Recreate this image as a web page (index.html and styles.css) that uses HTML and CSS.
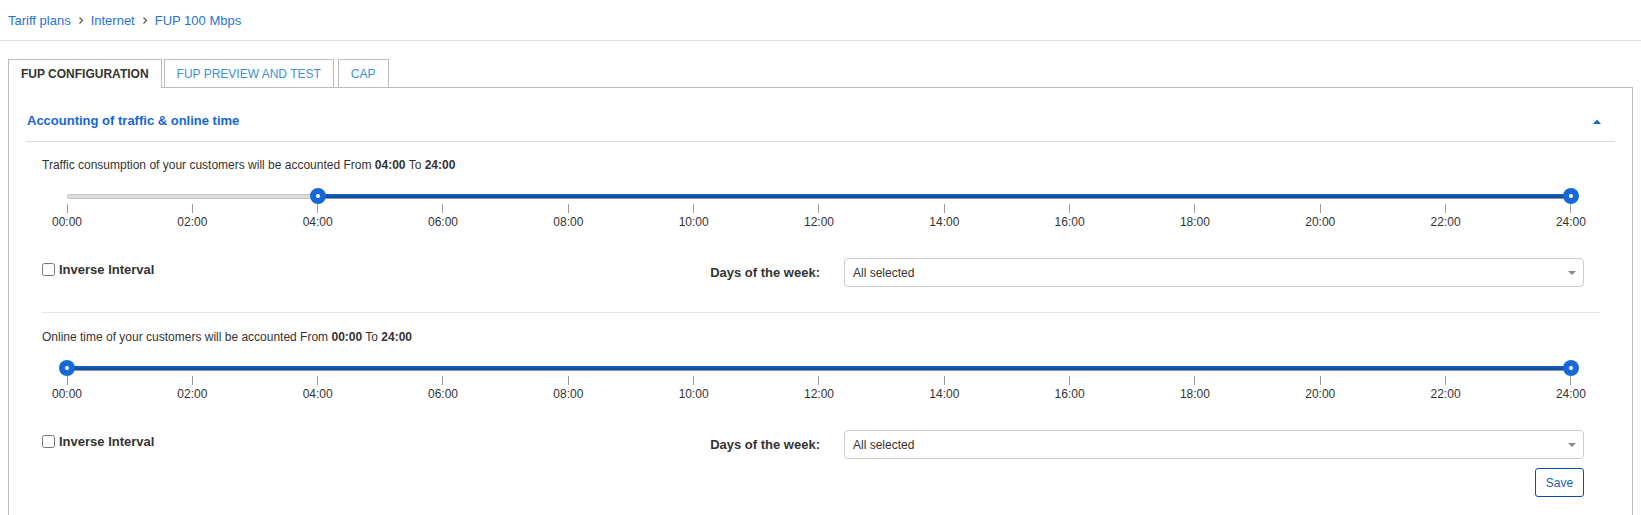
FILE: index.html
```html
<!DOCTYPE html>
<html lang="en">
<head>
<meta charset="utf-8">
<title>FUP 100 Mbps</title>
<link rel="stylesheet" href="styles.css">
</head>
<body>
<nav class="breadcrumb">
  <a class="crumb" href="#">Tariff plans</a>
  <svg class="chev" width="6" height="9" viewBox="0 0 6 9"><path d="M1.5 1.5 L4.5 4.5 L1.5 7.5" fill="none" stroke="#555" stroke-width="1.2"/></svg>
  <a class="crumb" href="#">Internet</a>
  <svg class="chev" width="6" height="9" viewBox="0 0 6 9"><path d="M1.5 1.5 L4.5 4.5 L1.5 7.5" fill="none" stroke="#555" stroke-width="1.2"/></svg>
  <a class="crumb" href="#">FUP 100 Mbps</a>
</nav>

<div class="tabs">
  <div class="tab tab-active">FUP CONFIGURATION</div>
  <div class="tab">FUP PREVIEW AND TEST</div>
  <div class="tab tab-last">CAP</div>
</div>

<div class="panel">
  <div class="panel-header">
    <span class="panel-title">Accounting of traffic &amp; online time</span>
    <svg class="caret" width="8" height="5" viewBox="0 0 8 5"><path d="M0 5 L4 0.5 L8 5 Z" fill="#1466d6"/></svg>
  </div>

  <section class="block">
    <p class="caption">Traffic consumption of your customers will be accounted From <b>04:00</b> To <b>24:00</b></p>
    <div class="slider">
      <div class="track">
        <div class="rail"></div>
        <div class="range" style="left:16.667%;right:0"></div>
        <div class="handle" style="left:16.667%"></div>
        <div class="handle" style="left:100%"></div>
      </div>
      <div class="ticks">
        <div class="tick"><span class="tick-line"></span><span class="tick-label">00:00</span></div>
        <div class="tick"><span class="tick-line"></span><span class="tick-label">02:00</span></div>
        <div class="tick"><span class="tick-line"></span><span class="tick-label">04:00</span></div>
        <div class="tick"><span class="tick-line"></span><span class="tick-label">06:00</span></div>
        <div class="tick"><span class="tick-line"></span><span class="tick-label">08:00</span></div>
        <div class="tick"><span class="tick-line"></span><span class="tick-label">10:00</span></div>
        <div class="tick"><span class="tick-line"></span><span class="tick-label">12:00</span></div>
        <div class="tick"><span class="tick-line"></span><span class="tick-label">14:00</span></div>
        <div class="tick"><span class="tick-line"></span><span class="tick-label">16:00</span></div>
        <div class="tick"><span class="tick-line"></span><span class="tick-label">18:00</span></div>
        <div class="tick"><span class="tick-line"></span><span class="tick-label">20:00</span></div>
        <div class="tick"><span class="tick-line"></span><span class="tick-label">22:00</span></div>
        <div class="tick"><span class="tick-line"></span><span class="tick-label">24:00</span></div>
      </div>
    </div>
    <div class="options">
      <label class="check"><input type="checkbox" class="checkbox">Inverse Interval</label>
      <span class="dow-label">Days of the week:</span>
      <div class="select"><span>All selected</span><span class="arrow"></span></div>
    </div>
  </section>

  <section class="block block-last">
    <p class="caption">Online time of your customers will be accounted From <b>00:00</b> To <b>24:00</b></p>
    <div class="slider">
      <div class="track">
        <div class="rail"></div>
        <div class="range" style="left:0;right:0"></div>
        <div class="handle" style="left:0%"></div>
        <div class="handle" style="left:100%"></div>
      </div>
      <div class="ticks">
        <div class="tick"><span class="tick-line"></span><span class="tick-label">00:00</span></div>
        <div class="tick"><span class="tick-line"></span><span class="tick-label">02:00</span></div>
        <div class="tick"><span class="tick-line"></span><span class="tick-label">04:00</span></div>
        <div class="tick"><span class="tick-line"></span><span class="tick-label">06:00</span></div>
        <div class="tick"><span class="tick-line"></span><span class="tick-label">08:00</span></div>
        <div class="tick"><span class="tick-line"></span><span class="tick-label">10:00</span></div>
        <div class="tick"><span class="tick-line"></span><span class="tick-label">12:00</span></div>
        <div class="tick"><span class="tick-line"></span><span class="tick-label">14:00</span></div>
        <div class="tick"><span class="tick-line"></span><span class="tick-label">16:00</span></div>
        <div class="tick"><span class="tick-line"></span><span class="tick-label">18:00</span></div>
        <div class="tick"><span class="tick-line"></span><span class="tick-label">20:00</span></div>
        <div class="tick"><span class="tick-line"></span><span class="tick-label">22:00</span></div>
        <div class="tick"><span class="tick-line"></span><span class="tick-label">24:00</span></div>
      </div>
    </div>
    <div class="options">
      <label class="check"><input type="checkbox" class="checkbox">Inverse Interval</label>
      <span class="dow-label">Days of the week:</span>
      <div class="select"><span>All selected</span><span class="arrow"></span></div>
    </div>
    <div class="actions">
      <button class="btn-save" type="button">Save</button>
    </div>
  </section>
</div>
</body>
</html>
```

FILE: styles.css
```css
* { box-sizing: border-box; }

body {
  margin: 0;
  font-family: "Liberation Sans", Arial, sans-serif;
  font-size: 12px;
  color: #333;
  background: #fff;
}

.breadcrumb {
  height: 41px;
  border-bottom: 1px solid #ddd;
  padding-left: 8px;
  display: flex;
  align-items: center;
  font-size: 13px;
}

.crumb {
  color: #1f73d6;
  text-decoration: none;
}

.chev {
  margin: 0 7px 0 7px;
}

.tabs {
  display: flex;
  align-items: flex-end;
  margin-top: 18px;
  padding-left: 8px;
}

.tab {
  height: 28px;
  padding: 0 12px;
  margin-right: 2px;
  border: 1px solid #bbb;
  border-bottom: none;
  display: flex;
  align-items: center;
  font-size: 12px;
  color: #3b8fe0;
  background: #fff;
}

.tab-last {
  margin-left: 2px;
}

.tab-active {
  height: 29px;
  margin-bottom: -1px;
  position: relative;
  z-index: 1;
  font-weight: bold;
  color: #333;
  padding: 0 12px 1px;
}

.panel {
  margin: 0 8px 0 8px;
  border: 1px solid #bbb;
  padding: 0 17px 40px;
}

.panel-header {
  display: flex;
  justify-content: space-between;
  align-items: center;
  padding: 25px 14px 12px 1px;
  line-height: 16px;
  border-bottom: 1px solid #ddd;
}

.panel-title {
  font-size: 13px;
  font-weight: bold;
  color: #1466d6;
}

.caret {
  display: block;
}

.block {
  margin: 0 15px 0 16px;
  padding: 15px 0 25px;
  border-bottom: 1px solid #e6e6e6;
}

.block-last {
  border-bottom: none;
  padding-top: 16px;
  padding-bottom: 0;
}

.caption {
  margin: 0;
  line-height: 16px;
  font-size: 12px;
}

.caption b {
  font-weight: bold;
}

.slider {
  margin: 15px 29px 0 25px;
}

.track {
  position: relative;
  height: 16px;
}

.rail {
  position: absolute;
  left: 0;
  right: 0;
  top: 6px;
  height: 5px;
  background: #dcdcdc;
  border: 1px solid #c4c4c4;
  border-radius: 3px;
}

.range {
  position: absolute;
  top: 6px;
  height: 4px;
  background: linear-gradient(#1660bd, #0a4a9c);
  box-shadow: 0 1px 1px rgba(0, 0, 0, 0.25);
}

.handle {
  position: absolute;
  top: 50%;
  width: 16px;
  height: 16px;
  border-radius: 50%;
  background: #1568d6;
  transform: translate(-50%, -50%);
  z-index: 2;
}

.handle::after {
  content: "";
  position: absolute;
  left: 6px;
  top: 6px;
  width: 4px;
  height: 4px;
  border-radius: 50%;
  background: #fff;
}

.ticks {
  display: flex;
  justify-content: space-between;
}

.tick {
  width: 0;
  display: flex;
  flex-direction: column;
  align-items: center;
}

.tick-line {
  display: block;
  width: 1px;
  height: 9px;
  background: #999;
}

.tick-label {
  margin-top: 2px;
  line-height: 14px;
  white-space: nowrap;
  font-size: 12px;
  color: #333;
}

.options {
  display: flex;
  align-items: center;
  margin-top: 29px;
  padding-right: 16px;
  height: 29px;
}

.check {
  flex: 1;
  align-self: flex-start;
  margin-top: 4px;
  display: flex;
  align-items: center;
  line-height: 16px;
  font-size: 13px;
  font-weight: bold;
  color: #333;
}

.checkbox {
  width: 13px;
  height: 13px;
  margin: 0 4px 2px 0;
}

.dow-label {
  font-size: 13px;
  font-weight: bold;
  color: #333;
  margin-right: 24px;
}

.select {
  width: 740px;
  height: 29px;
  border: 1px solid #ccc;
  border-radius: 4px;
  padding: 0 8px;
  display: flex;
  align-items: center;
  justify-content: space-between;
  font-size: 12px;
  color: #333;
}

.arrow {
  width: 0;
  height: 0;
  border-left: 4px solid transparent;
  border-right: 4px solid transparent;
  border-top: 4px solid #888;
  margin-right: -1px;
}

.actions {
  display: flex;
  justify-content: flex-end;
  padding-right: 16px;
  margin-top: 9px;
}

.btn-save {
  width: 49px;
  height: 29px;
  border: 1px solid #0d4f9a;
  border-radius: 3px;
  background: #fff;
  color: #1a5fb4;
  font-family: "Liberation Sans", Arial, sans-serif;
  font-size: 12px;
  padding: 0;
}
```
